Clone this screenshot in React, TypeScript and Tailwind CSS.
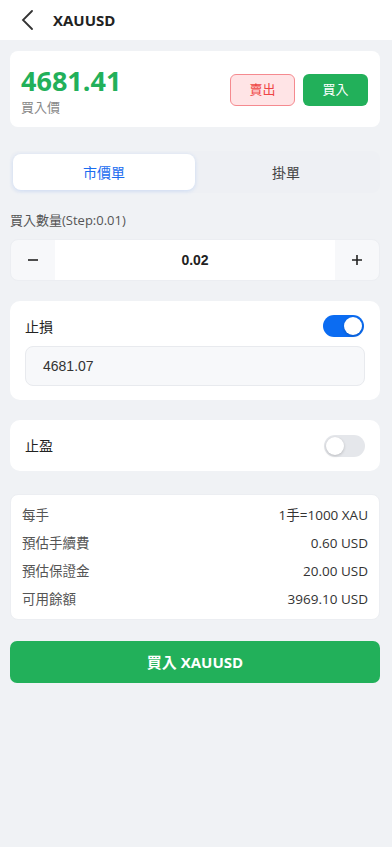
import { useState } from "react";

const Toggle = ({ on, onChange }: { on: boolean; onChange: () => void }) => (
  <button
    onClick={onChange}
    className={`relative w-[41px] h-[22px] rounded-full transition-colors ${on ? "bg-[#0b6cf2]" : "bg-[#e5e7eb]"}`}
  >
    <span
      className={`absolute top-[2px] w-[18px] h-[18px] rounded-full bg-white shadow-[0_1px_3px_rgba(0,0,0,0.2)] transition-all ${on ? "left-[21px]" : "left-[2px]"}`}
    />
  </button>
);

const App = () => {
  const [tab, setTab] = useState<"market" | "limit">("market");
  const [qty, setQty] = useState(0.02);
  const [sl, setSl] = useState(true);
  const [tp, setTp] = useState(false);

  const rows = [
    ["每手", "1手=1000 XAU"],
    ["預估手續費", "0.60 USD"],
    ["預估保證金", "20.00 USD"],
    ["可用餘額", "3969.10 USD"],
  ];

  return (
    <div
      className="min-h-[847px] bg-[#f0f2f5] text-[#222]"
      style={{ fontFamily: '"Open Sans", "Noto Sans CJK TC", sans-serif' }}
    >
      <div className="h-[40px] bg-white flex items-center pl-[20px]">
        <svg width="16" height="20" viewBox="0 0 16 20" fill="none" stroke="#333" strokeWidth="1.8" strokeLinecap="round">
          <path d="M12 1 L3 10 L12 19" />
        </svg>
        <span className="ml-[17px] text-[15px] font-bold text-[#222]">XAUUSD</span>
      </div>

      <div className="pl-[10px] pr-[12px] pt-[11px]">
        <div className="bg-white rounded-[8px] h-[76px] px-[11px] pr-[12px] flex items-center justify-between">
          <div className="pt-[2px]">
            <div className="text-[27px] font-bold text-[#22b05a] leading-[32px]">4681.41</div>
            <div className="text-[13px] text-[#888] leading-[18px] mt-[1px]">買入價</div>
          </div>
          <div className="flex gap-[8px] pt-[1px]">
            <button className="w-[65px] h-[32px] rounded-[6px] bg-[#ffe4e6] border border-[#f58a8f] text-[#ef4444] text-[13px]">
              賣出
            </button>
            <button className="w-[65px] h-[32px] rounded-[6px] bg-[#22b05a] text-white text-[13px]">
              買入
            </button>
          </div>
        </div>

        <div className="mt-[24px] bg-[#eef0f4] rounded-[8px] p-[3px] flex">
          <button
            onClick={() => setTab("market")}
            className={`flex-1 h-[36px] rounded-[8px] text-[14px] ${tab === "market" ? "bg-white text-[#1a6cf0] shadow-[0_1px_4px_rgba(59,130,246,0.2)]" : "text-[#444]"}`}
          >
            市價單
          </button>
          <button
            onClick={() => setTab("limit")}
            className={`flex-1 h-[36px] rounded-[8px] text-[14px] ${tab === "limit" ? "bg-white text-[#1a6cf0] shadow-[0_1px_4px_rgba(59,130,246,0.2)]" : "text-[#444]"}`}
          >
            掛單
          </button>
        </div>

        <div className="mt-[18px] text-[13px] text-[#555] leading-[18px]">買入數量(Step:0.01)</div>

        <div className="mt-[10px] h-[42px] rounded-[8px] bg-[#f7f8fa] border border-[#eceef2] flex overflow-hidden">
          <button
            onClick={() => setQty(Math.max(0.01, +(qty - 0.01).toFixed(2)))}
            className="w-[44px] flex items-center justify-center text-[#222]"
          >
            <svg width="12" height="12" viewBox="0 0 12 12"><path d="M1 6h10" stroke="#222" strokeWidth="1.6" /></svg>
          </button>
          <div
            className="flex-1 bg-white flex items-center justify-center text-[14px] font-bold text-[#222]"
            style={{ fontFamily: '"Liberation Sans", Arial, sans-serif' }}
          >
            {qty.toFixed(2)}
          </div>
          <button
            onClick={() => setQty(+(qty + 0.01).toFixed(2))}
            className="w-[44px] flex items-center justify-center"
          >
            <svg width="12" height="12" viewBox="0 0 12 12"><path d="M1 6h10M6 1v10" stroke="#222" strokeWidth="1.6" /></svg>
          </button>
        </div>

        <div className="mt-[20px] bg-white rounded-[10px] px-[15px] pt-[14px] pb-[14px]">
          <div className="flex items-center justify-between pr-[1px]">
            <span className="text-[14px] text-[#222]">止損</span>
            <Toggle on={sl} onChange={() => setSl(!sl)} />
          </div>
          {sl && (
            <div
              className="mt-[9px] h-[40px] rounded-[8px] bg-[#f7f8fa] border border-[#e8eaee] flex items-center px-[17px] text-[14px] text-[#333]"
              style={{ fontFamily: '"Liberation Sans", Arial, sans-serif' }}
            >
              4681.07
            </div>
          )}
        </div>

        <div className="mt-[20px] bg-white rounded-[10px] px-[15px] h-[51px] flex items-center justify-between">
          <span className="text-[14px] text-[#222]">止盈</span>
          <Toggle on={tp} onChange={() => setTp(!tp)} />
        </div>

        <div className="mt-[23px] bg-white rounded-[8px] border border-[#eceef2] px-[11px] py-[6px]">
          {rows.map(([k, v]) => (
            <div key={k} className="flex justify-between items-center h-[28px] text-[13.5px] text-[#333]">
              <span className="text-[#555]">{k}</span>
              <span>{v}</span>
            </div>
          ))}
        </div>

        <button className="mt-[21px] w-full h-[42px] rounded-[7px] bg-[#22b05a] text-white text-[15px] font-bold">
          買入 XAUUSD
        </button>
      </div>
    </div>
  );
};

export default App;
